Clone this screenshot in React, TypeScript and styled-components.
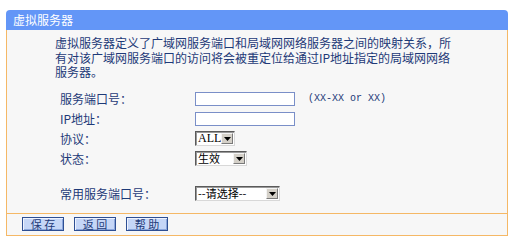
import React from "react";
import styled, { createGlobalStyle } from "styled-components";

const GlobalStyle = createGlobalStyle`
  body {
    margin: 0;
    background: #ffffff;
    font-family: "Noto Sans CJK SC", "Liberation Sans", sans-serif;
    font-size: 12px;
  }
`;

const Panel = styled.div`
  margin: 10px 0 0 6px;
  width: 502px;
`;

const Header = styled.div`
  height: 20px;
  line-height: 20px;
  padding-left: 7px;
  background: #6396f7;
  border-radius: 4px 4px 0 0;
  color: #ffffff;
  font-size: 12px;
`;

const Body = styled.div`
  background: #f7f7f7;
  border-left: 1px solid #f5b866;
  border-right: 1px solid #f5b866;
  padding: 6px 0 9px 48px;
  color: #1e3a78;
`;

const Intro = styled.div`
  line-height: 14.5px;
  white-space: nowrap;
`;

const Form = styled.div`
  display: flex;
  flex-direction: column;
  margin-top: 9px;
  padding-left: 5px;
`;

const Row = styled.div<{ $gap?: number }>`
  display: grid;
  grid-template-columns: 135px auto 1fr;
  align-items: center;
  height: 20px;
  margin-top: ${({ $gap }) => $gap ?? 0}px;
`;

const Label = styled.span`
  color: #1e3a78;
  line-height: 18px;
`;

const TextInput = styled.input`
  box-sizing: border-box;
  width: 100px;
  height: 14px;
  margin: 0;
  padding: 0 2px;
  border: 1px solid #7a8fc8;
  background: #ffffff;
  outline: none;
`;

const Hint = styled.span`
  margin-left: 13px;
  font-family: "Liberation Mono", monospace;
  font-size: 10px;
  line-height: 14px;
  color: #1e3a78;
`;

const SelectBox = styled.div<{ $w: number }>`
  box-sizing: border-box;
  display: flex;
  align-items: center;
  width: ${({ $w }) => $w}px;
  height: 15px;
  background: #ffffff;
  border-style: solid;
  border-width: 1px;
  border-color: #5a5a5a #d8d8d8 #d8d8d8 #5a5a5a;
  box-shadow: inset 1px 1px 0 #9a9a9a;
`;

const SelectValue = styled.span<{ $serif?: boolean }>`
  flex: 1;
  padding-left: 2px;
  height: 13px;
  line-height: 13px;
  color: #000000;
  font-family: ${({ $serif }) =>
    $serif ? `"Liberation Serif", serif` : `"Noto Sans CJK SC", sans-serif`};
  font-size: ${({ $serif }) => ($serif ? 12 : 11)}px;
  white-space: nowrap;
`;

const ArrowBtn = styled.span`
  box-sizing: border-box;
  display: flex;
  align-items: center;
  justify-content: center;
  flex: none;
  width: 12px;
  height: 11px;
  margin-right: 1px;
  background: #d4d0c8;
  border-style: solid;
  border-width: 1px;
  border-color: #f4f4f4 #7a7a7a #7a7a7a #f4f4f4;
`;

const Footer = styled.div`
  display: flex;
  gap: 10px;
  height: 23px;
  padding: 3px 0 0 15px;
  box-sizing: border-box;
  background: #f7f7f7;
  border: 1px solid #f5b866;
`;

const Button = styled.button`
  box-sizing: border-box;
  width: 42px;
  height: 14px;
  padding: 0;
  margin: 0;
  background: #c5d6f7;
  border: 1px solid #2e4f93;
  box-shadow: inset 1px 1px 0 #eef3ff, inset -1px -1px 0 #8aa6dc;
  color: #1e3a78;
  font-family: "Noto Sans CJK SC", sans-serif;
  font-size: 11px;
  line-height: 12px;
  white-space: pre;
`;

function Select({ value, width, serif }: { value: string; width: number; serif?: boolean }) {
  return (
    <SelectBox $w={width}>
      <SelectValue $serif={serif}>{value}</SelectValue>
      <ArrowBtn>
        <svg width="7" height="4" viewBox="0 0 7 4">
          <path d="M0 0h7L3.5 4z" fill="#000" />
        </svg>
      </ArrowBtn>
    </SelectBox>
  );
}

export default function App() {
  return (
    <>
      <GlobalStyle />
      <Panel>
        <Header>虚拟服务器</Header>
        <Body>
          <Intro>
            虚拟服务器定义了广域网服务端口和局域网网络服务器之间的映射关系，所
            <br />
            有对该广域网服务端口的访问将会被重定位给通过IP地址指定的局域网网络
            <br />
            服务器。
          </Intro>
          <Form>
            <Row>
              <Label>服务端口号：</Label>
              <TextInput />
              <Hint>(XX-XX or XX)</Hint>
            </Row>
            <Row>
              <Label>IP地址：</Label>
              <TextInput />
            </Row>
            <Row>
              <Label>协议：</Label>
              <Select value="ALL" width={40} serif />
            </Row>
            <Row>
              <Label>状态：</Label>
              <Select value="生效" width={52} />
            </Row>
            <Row $gap={15}>
              <Label>常用服务端口号：</Label>
              <Select value="--请选择--" width={85} />
            </Row>
          </Form>
        </Body>
        <Footer>
          <Button>保 存</Button>
          <Button>返 回</Button>
          <Button>帮 助</Button>
        </Footer>
      </Panel>
    </>
  );
}
